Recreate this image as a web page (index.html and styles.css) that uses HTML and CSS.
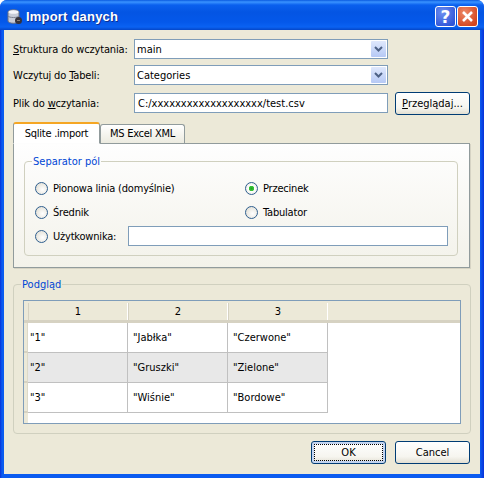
FILE: index.html
```html
<!DOCTYPE html>
<html>
<head>
    <meta charset="UTF-8">
    <title>Import danych</title>
    <link rel="stylesheet" href="styles.css">
</head>
<body>
<div class="window">
    <div class="titlebar">
        <svg class="app-icon" width="16" height="16" viewBox="0 0 16 16">
            <path d="M1 3c0-3 11-3 11 0v9c0 3-11 3-11 0z" fill="#c8ccd8" stroke="#6a7080"/>
            <ellipse cx="6.500" cy="3" rx="5" ry="1.800" fill="#f4f5fa"/>
            <path d="M1 7c1 2 10 2 11 0" fill="none" stroke="#7b8090"/>
            <circle cx="11.500" cy="11.500" r="3.500" fill="#35323a"/>
            <path d="M10 11.500h3" stroke="#8a8078"/>
        </svg>
        <span class="title-text">Import danych</span>
        <button class="cap-btn cap-help">?</button>
        <button class="cap-btn cap-close">
            <svg width="13" height="13" viewBox="0 0 13 13"><path d="M2 2l9 9M11 2l-9 9" stroke="#fff" stroke-width="2.6"/></svg>
        </button>
    </div>

    <div class="client">
        <div class="file-form">
            <label class="row-label row-one"><u>S</u>truktura do wczytania:</label>
            <div class="combo row-one">
                <span>main</span>
                <span class="combo-btn"><svg width="9" height="6" viewBox="0 0 9 6"><path d="M1 1l3.500 3.500L8 1" fill="none" stroke="#4d6185" stroke-width="2"/></svg></span>
            </div>
            <label class="row-label row-two">Wczytuj do <u>T</u>abeli:</label>
            <div class="combo row-two">
                <span>Categories</span>
                <span class="combo-btn"><svg width="9" height="6" viewBox="0 0 9 6"><path d="M1 1l3.500 3.500L8 1" fill="none" stroke="#4d6185" stroke-width="2"/></svg></span>
            </div>
            <label class="row-label row-three">Plik do <u>w</u>czytania:</label>
            <div class="text-input path-input row-three">C:/xxxxxxxxxxxxxxxxxxx/test.csv</div>
            <button class="xp-btn browse-btn"><u>P</u>rzeglądaj...</button>
        </div>

        <div class="tabs">
            <div class="tab tab-active">Sqlite .import</div>
            <div class="tab">MS Excel XML</div>
        </div>
        <div class="tab-pane">
            <fieldset class="group sep-group">
                <legend>Separator pól</legend>
                <div class="radio-grid">
                    <div class="radio-item"><span class="radio"></span>Pionowa linia (domyślnie)</div>
                    <div class="radio-item"><span class="radio radio-on"></span>Przecinek</div>
                    <div class="radio-item"><span class="radio"></span>Średnik</div>
                    <div class="radio-item"><span class="radio"></span>Tabulator</div>
                    <div class="radio-item radio-wide"><span class="radio"></span>Użytkownika:<div class="text-input custom-input"></div></div>
                </div>
            </fieldset>
        </div>

        <fieldset class="group preview-group">
            <legend>Podgląd</legend>
            <div class="table-frame">
                <div class="table-head">
                    <div class="corner"></div>
                    <div class="head-cell">1</div>
                    <div class="head-cell">2</div>
                    <div class="head-cell">3</div>
                </div>
                <div class="table-row">
                    <div class="stub"></div>
                    <div class="cell">"1"</div><div class="cell">"Jabłka"</div><div class="cell">"Czerwone"</div>
                </div>
                <div class="table-row row-alt">
                    <div class="stub"></div>
                    <div class="cell">"2"</div><div class="cell">"Gruszki"</div><div class="cell">"Zielone"</div>
                </div>
                <div class="table-row">
                    <div class="stub"></div>
                    <div class="cell">"3"</div><div class="cell">"Wiśnie"</div><div class="cell">"Bordowe"</div>
                </div>
                <div class="table-rest"><div class="stub stub-rest"></div></div>
            </div>
        </fieldset>

        <div class="actions">
            <button class="xp-btn action-btn btn-default"><span>OK</span></button>
            <button class="xp-btn action-btn">Cancel</button>
        </div>
    </div>
</div>
</body>
</html>
```

FILE: styles.css
```css
* {
    box-sizing: border-box;
}

html, body {
    margin: 0;
    padding: 0;
}

body {
    width: 484px;
    height: 478px;
    overflow: hidden;
    background: #fff;
    font-family: "DejaVu Sans Condensed", "DejaVu Sans", sans-serif;
    font-size: 11px;
    color: #000;
}

.window {
    width: 484px;
    height: 478px;
    display: flex;
    flex-direction: column;
    padding: 0 4px 4px;
    background: linear-gradient(90deg, #0831d9 0, #0a5bf0 2px, #0a5bf0 480px, #0831d9 100%);
    border-radius: 7px 7px 0 0;
}

.titlebar {
    height: 30px;
    margin: 0 -4px;
    padding: 3px 6px 0 7px;
    display: flex;
    align-items: center;
    gap: 3px;
    border-radius: 7px 7px 0 0;
    background: linear-gradient(180deg, #0a5ae0 0, #3a93ff 2px, #0a60ee 5px, #0455e3 12px, #0458ea 22px, #0a62f2 27px, #0446c8 30px);
}

.app-icon {
    flex: none;
}

.title-text {
    flex: 1;
    color: #fff;
    font-family: "Liberation Sans", sans-serif;
    font-weight: bold;
    font-size: 13px;
    letter-spacing: 0.2px;
    text-shadow: 1px 1px 0 #0f2f90;
}

.cap-btn {
    width: 21px;
    height: 21px;
    padding: 0;
    display: flex;
    align-items: center;
    justify-content: center;
    border: 1px solid #fff;
    border-radius: 3px;
    color: #fff;
}

.cap-help {
    background: radial-gradient(circle at 35% 30%, #6d8ff0, #2f55d8 80%);
    font-family: "DejaVu Sans", sans-serif;
    font-size: 17px;
    font-weight: bold;
}

.cap-close {
    margin-left: -2px;
    background: radial-gradient(circle at 35% 30%, #ee8a68, #d2441e 80%);
}

.client {
    flex: 1;
    background: #ece9d8;
    padding: 9px 9px 0;
    display: flex;
    flex-direction: column;
}

.file-form {
    display: grid;
    grid-template-columns: 121px 254px 82px;
    grid-template-rows: 20px 20px 22px;
    row-gap: 6px;
    align-items: center;
}

.file-form .row-three {
    margin-top: 2px;
}

.row-one { grid-row: 1; }
.row-two { grid-row: 2; }
.row-three { grid-row: 3; }

.row-label {
    grid-column: 1;
    letter-spacing: -0.15px;
}

.combo {
    grid-column: 2;
    height: 20px;
    display: flex;
    align-items: center;
    justify-content: space-between;
    padding: 0 1px 0 2px;
    background: #fff;
    border: 1px solid #7f9db9;
}

.combo-btn {
    width: 15px;
    height: 16px;
    display: flex;
    align-items: center;
    justify-content: center;
    border-radius: 1px;
    background: linear-gradient(180deg, #dfe8fc, #b6c9f5);
}

.text-input {
    height: 20px;
    background: #fff;
    border: 1px solid #7f9db9;
}

.path-input {
    grid-column: 2;
    padding: 2px 0 0 3px;
    line-height: 15px;
}

.xp-btn {
    height: 23px;
    padding: 0;
    font-family: inherit;
    font-size: 11px;
    color: #000;
    border: 1px solid #003c74;
    border-radius: 3px;
    background: linear-gradient(180deg, #fff 0, #f6f5ef 70%, #e2dfd2 100%);
}

.browse-btn {
    grid-column: 3;
    grid-row: 3;
    align-self: start;
    width: 75px;
    margin-left: 7px;
    margin-top: 1px;
}

.tabs {
    display: flex;
    margin-top: 9px;
    height: 21px;
    align-items: flex-end;
    position: relative;
    z-index: 1;
}

.tab {
    width: 85px;
    height: 19px;
    text-align: center;
    line-height: 18px;
    letter-spacing: -0.25px;
    border: 1px solid #919b9c;
    border-bottom: none;
    border-radius: 3px 3px 0 0;
    background: linear-gradient(180deg, #fff, #ecebe0);
}

.tab-active {
    width: 87px;
    height: 22px;
    line-height: 20px;
    border-top: 2px solid #f5a623;
    border-bottom: 1px solid #fdfdfd;
    background: #fff;
    margin-bottom: -1px;
}

.tab-pane {
    width: 457px;
    height: 125px;
    padding: 11px 10px 0;
    border: 1px solid #919b9c;
    background: linear-gradient(180deg, #fefefe, #f3f2ea);
    box-shadow: 1px 1px 0 #d6d3c4;
}

.group {
    margin: 0;
    border: 1px solid #d0d0bf;
    border-radius: 4px;
    min-width: 0;
}

.group legend {
    color: #0046d5;
    padding: 0 1px;
    margin-left: 7px;
    line-height: 13px;
}

.sep-group {
    width: 434px;
    height: 101px;
    padding: 0;
}

.radio-grid {
    display: grid;
    grid-template-columns: 210px 1fr;
    grid-auto-rows: 24px;
    padding: 8px 9px 0 10px;
    align-items: center;
}

.radio-item {
    display: flex;
    align-items: center;
    gap: 5px;
    letter-spacing: -0.2px;
}

.radio-wide {
    grid-column: 1 / 3;
    height: 20px;
}

.radio {
    width: 13px;
    height: 13px;
    flex: none;
    border-radius: 50%;
    border: 1px solid #2f5f8f;
    background: radial-gradient(circle at 60% 60%, #fff, #dcd9cd);
}

.radio-on {
    background: radial-gradient(circle, #21a621 0, #3cc63c 2.5px, #fff 3px, #e4e2d8 100%);
}

.custom-input {
    width: 320px;
    margin-left: auto;
}

.preview-group {
    width: 458px;
    height: 156px;
    margin-top: 10px;
    padding: 0 9px;
}

.preview-group legend {
    margin-left: -2px;
}

.table-frame {
    height: 124px;
    margin-top: 9px;
    border: 1px solid #7f9db9;
    background: #fff;
    display: flex;
    flex-direction: column;
}

.table-head {
    height: 22px;
    flex: none;
    display: flex;
    background: #ece9d8;
    border-bottom: 3px solid #d6d2c2;
}

.corner {
    width: 4px;
}

.head-cell {
    width: 100px;
    text-align: center;
    border-left: 1px solid #d6d2c2;
    border-right: 1px solid #fff;
    margin: 2px 0 0;
    height: 17px;
    line-height: 17px;
}

.table-row {
    height: 30px;
    flex: none;
    display: flex;
}

.stub {
    width: 4px;
    flex: none;
    background: #ece9d8;
    border-right: 1px solid #dcd9c9;
    border-bottom: 2px solid #d6d2c2;
}

.stub-rest {
    border-bottom: none;
    border-right: none;
    height: 100%;
}

.cell {
    width: 100px;
    padding: 0 0 0 5px;
    line-height: 29px;
    border-right: 1px solid #c0c0c0;
    border-bottom: 1px solid #c0c0c0;
}

.stub + .cell {
    padding-left: 2px;
}

.row-alt .cell {
    background: #e8e8e8;
}

.table-rest {
    flex: 1;
}

.actions {
    display: flex;
    justify-content: flex-end;
    gap: 9px;
    margin-top: 7px;
    padding-right: 1px;
}

.action-btn {
    width: 75px;
    height: 23px;
}

.btn-default {
    padding: 2px;
    box-shadow: inset 0 0 0 2px #c3d4f0;
}

.btn-default span {
    display: block;
    height: 100%;
    line-height: 15px;
    border: 1px dotted #000;
}
```
